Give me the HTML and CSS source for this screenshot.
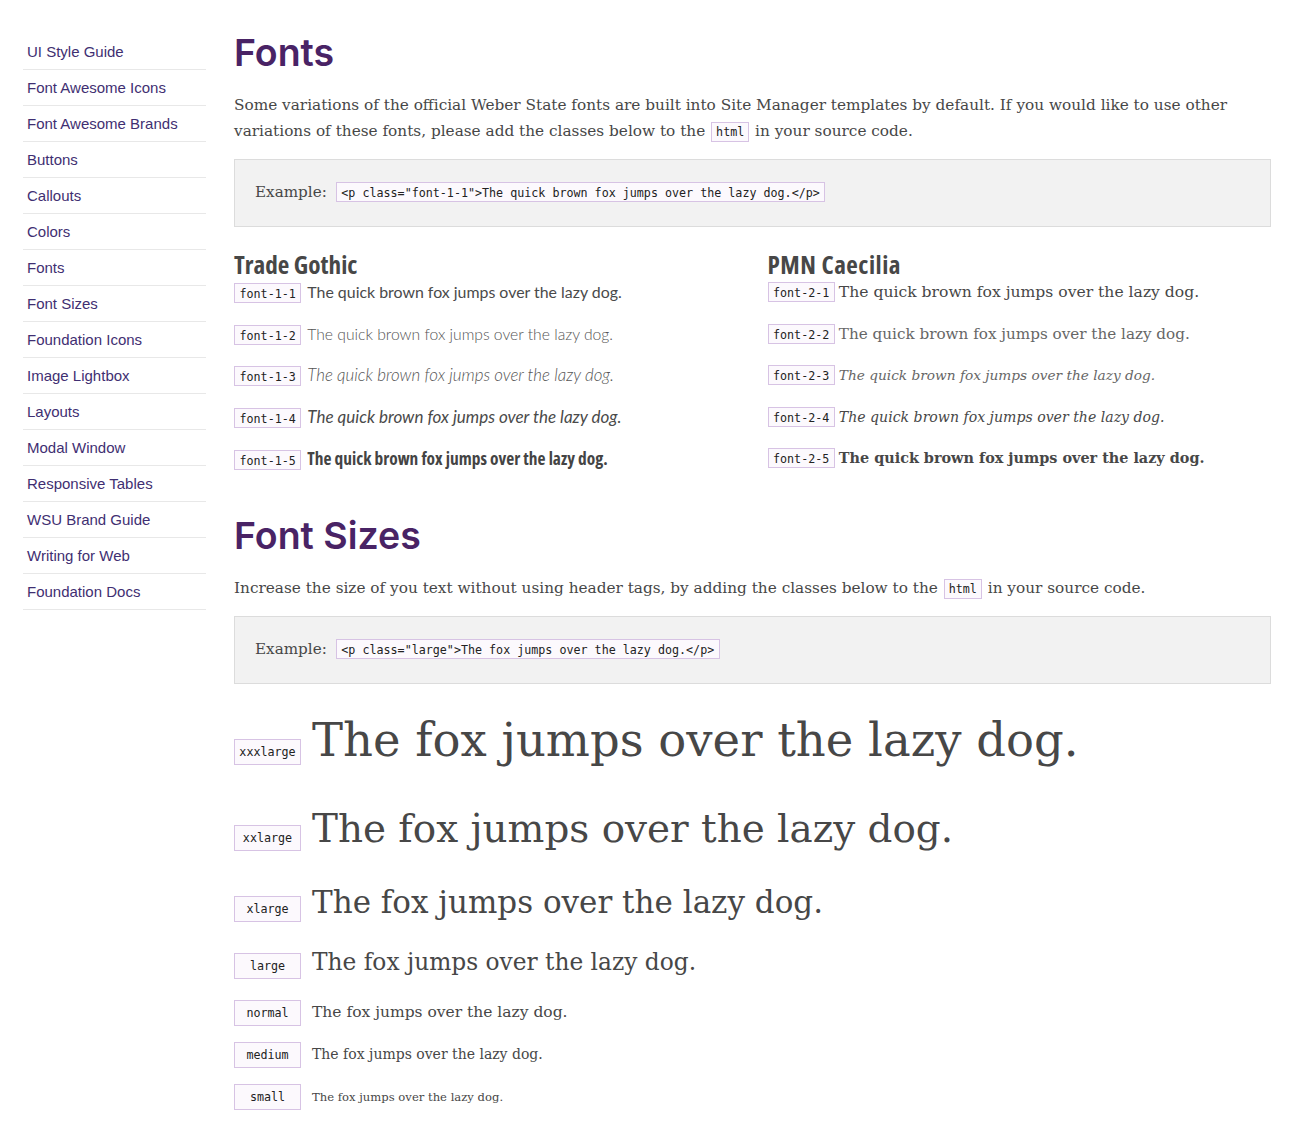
FILE: index.html
```html
<!DOCTYPE html>
<html lang="en">
<head>
<meta charset="utf-8">
<title>Fonts - UI Style Guide</title>
<link rel="stylesheet" href="styles.css">
</head>
<body>
<div class="page">
  <nav class="sidebar">
    <ul class="nav-list">
      <li class="nav-item"><a class="nav-link" href="#">UI Style Guide</a></li>
      <li class="nav-item"><a class="nav-link" href="#">Font Awesome Icons</a></li>
      <li class="nav-item"><a class="nav-link" href="#">Font Awesome Brands</a></li>
      <li class="nav-item"><a class="nav-link" href="#">Buttons</a></li>
      <li class="nav-item"><a class="nav-link" href="#">Callouts</a></li>
      <li class="nav-item"><a class="nav-link" href="#">Colors</a></li>
      <li class="nav-item"><a class="nav-link" href="#">Fonts</a></li>
      <li class="nav-item"><a class="nav-link" href="#">Font Sizes</a></li>
      <li class="nav-item"><a class="nav-link" href="#">Foundation Icons</a></li>
      <li class="nav-item"><a class="nav-link" href="#">Image Lightbox</a></li>
      <li class="nav-item"><a class="nav-link" href="#">Layouts</a></li>
      <li class="nav-item"><a class="nav-link" href="#">Modal Window</a></li>
      <li class="nav-item"><a class="nav-link" href="#">Responsive Tables</a></li>
      <li class="nav-item"><a class="nav-link" href="#">WSU Brand Guide</a></li>
      <li class="nav-item"><a class="nav-link" href="#">Writing for Web</a></li>
      <li class="nav-item"><a class="nav-link" href="#">Foundation Docs</a></li>
    </ul>
  </nav>

  <main class="content">
    <h1 class="section-title">Fonts</h1>
    <p class="lead">Some variations of the official Weber State fonts are built into Site Manager templates by default. If you would like to use other variations of these fonts, please add the classes below to the <code class="inline-code">html</code> in your source code.</p>
    <div class="example"><span class="example-label">Example:</span><code class="code">&lt;p class="font-1-1"&gt;The quick brown fox jumps over the lazy dog.&lt;/p&gt;</code></div>

    <div class="font-columns">
      <div class="font-col font-col--tg">
        <h3 class="family-title family-title--tg">Trade Gothic</h3>
        <p class="font-row"><code class="code row-label">font-1-1</code><span class="f11">The quick brown fox jumps over the lazy dog.</span></p>
        <p class="font-row"><code class="code row-label">font-1-2</code><span class="f12">The quick brown fox jumps over the lazy dog.</span></p>
        <p class="font-row"><code class="code row-label">font-1-3</code><span class="f13">The quick brown fox jumps over the lazy dog.</span></p>
        <p class="font-row"><code class="code row-label">font-1-4</code><span class="f14">The quick brown fox jumps over the lazy dog.</span></p>
        <p class="font-row"><code class="code row-label">font-1-5</code><span class="f15">The quick brown fox jumps over the lazy dog.</span></p>
      </div>
      <div class="font-col font-col--pc">
        <h3 class="family-title family-title--pc">PMN Caecilia</h3>
        <p class="font-row"><code class="code row-label">font-2-1</code><span class="f21">The quick brown fox jumps over the lazy dog.</span></p>
        <p class="font-row"><code class="code row-label">font-2-2</code><span class="f22">The quick brown fox jumps over the lazy dog.</span></p>
        <p class="font-row"><code class="code row-label">font-2-3</code><span class="f23">The quick brown fox jumps over the lazy dog.</span></p>
        <p class="font-row"><code class="code row-label">font-2-4</code><span class="f24">The quick brown fox jumps over the lazy dog.</span></p>
        <p class="font-row"><code class="code row-label">font-2-5</code><span class="f25">The quick brown fox jumps over the lazy dog.</span></p>
      </div>
    </div>

    <h2 class="section-title section-title--next">Font Sizes</h2>
    <p class="lead">Increase the size of you text without using header tags, by adding the classes below to the <code class="inline-code">html</code> in your source code.</p>
    <div class="example"><span class="example-label">Example:</span><code class="code">&lt;p class="large"&gt;The fox jumps over the lazy dog.&lt;/p&gt;</code></div>

    <div class="size-list">
      <p class="size-row size-xxxlarge"><code class="size-label">xxxlarge</code>The fox jumps over the lazy dog.</p>
      <p class="size-row size-xxlarge"><code class="size-label">xxlarge</code>The fox jumps over the lazy dog.</p>
      <p class="size-row size-xlarge"><code class="size-label">xlarge</code>The fox jumps over the lazy dog.</p>
      <p class="size-row size-large"><code class="size-label">large</code>The fox jumps over the lazy dog.</p>
      <p class="size-row size-normal"><code class="size-label">normal</code>The fox jumps over the lazy dog.</p>
      <p class="size-row size-medium"><code class="size-label">medium</code>The fox jumps over the lazy dog.</p>
      <p class="size-row size-small"><code class="size-label">small</code>The fox jumps over the lazy dog.</p>
    </div>
  </main>
</div>
</body>
</html>
```
FILE: styles.css
```css
html, body {
  margin: 0;
  padding: 0;
  background: #ffffff;
}

body {
  font-family: "DejaVu Serif", "Liberation Serif", serif;
  color: #474747;
}

.page {
  display: flex;
  align-items: flex-start;
}

/* Sidebar */
.sidebar {
  flex: 0 0 183px;
  width: 183px;
  margin: 34px 0 0 23px;
}

.nav-list {
  list-style: none;
  margin: 0;
  padding: 0;
}

.nav-item {
  border-bottom: 1px solid #e8e8e8;
}

.nav-link {
  display: block;
  padding: 0 4px;
  line-height: 35px;
  font-family: "Liberation Sans", Arial, sans-serif;
  font-size: 15px;
  color: #3f2f72;
  text-decoration: none;
}

/* Main content */
.content {
  width: 1037px;
  margin-left: 28px;
  padding-top: 31px;
}

.section-title {
  margin: 0;
  font-family: Inter, "Liberation Sans", sans-serif;
  font-weight: 600;
  font-size: 37.5px;
  line-height: 43px;
  color: #492365;
}

.section-title--next {
  margin-top: 25px;
}

.lead {
  margin: 18px 0 14px;
  font-size: 15.3px;
  line-height: 26px;
}

.inline-code,
.code,
.size-label {
  font-family: "DejaVu Sans Mono", "Liberation Mono", monospace;
  font-size: 11.7px;
  color: #222222;
  background: #fcf9fd;
  border: 1px solid #d7c3e4;
}

.inline-code {
  padding: 2px 4px;
  margin: 0 1px;
}

.code {
  padding: 3px 4.5px 1px;
  line-height: 1;
}

.example {
  background: #f2f2f2;
  border: 1px solid #dcdcdc;
  padding: 19px 20px 21px;
  line-height: 26px;
}

.example-label {
  font-size: 15.2px;
  margin-right: 9px;
}

/* Font families */
.font-columns {
  display: grid;
  grid-template-columns: 1fr 1fr;
  column-gap: 30px;
  margin-top: 23px;
}

.family-title {
  margin: 0 0 2px;
  font-family: "Open Sans", "DejaVu Sans Condensed", sans-serif;
  font-stretch: 75%;
  font-weight: 700;
  font-size: 25.2px;
  line-height: 28px;
  color: #474747;
}

.family-title--pc {
  letter-spacing: 0.5px;
}

.font-row {
  margin: 0 0 17.5px;
  font-family: Lato, "Liberation Sans", sans-serif;
  font-size: 16px;
  line-height: 24px;
  white-space: nowrap;
}

.font-col--pc .font-row {
  font-family: "DejaVu Serif", serif;
  font-size: 15.6px;
}

.font-col--tg .row-label {
  margin-right: 6px;
}

.font-col--pc .row-label {
  margin-right: 4px;
}

.f11 { font-family: Lato, sans-serif; font-weight: 400; font-size: 15.9px; color: #4a4a4a; }
.f12 { font-family: Lato, sans-serif; font-weight: 300; font-size: 15.7px; color: #555555; }
.f13 { font-family: Lato, sans-serif; font-weight: 300; font-style: italic; font-size: 16.9px; color: #555555; }
.f14 { font-family: Lato, sans-serif; font-weight: 400; font-style: italic; font-size: 17px; color: #4a4a4a; }
.f15 { font-family: "Open Sans", "DejaVu Sans Condensed", sans-serif; font-stretch: 75%; font-weight: 700; font-size: 17.4px; color: #444444; }

.f21 { font-size: 15.6px; color: #474747; }
.f22 { font-size: 15.2px; color: #666666; }
.f23 { font-style: italic; font-size: 13.7px; color: #666666; }
.f24 { font-style: italic; font-size: 14.1px; color: #474747; }
.f25 { font-weight: 700; font-size: 14.4px; color: #474747; }

/* Font sizes */
.size-list {
  margin-top: 19px;
}

.size-row {
  margin: 0 0 16px;
  color: #474747;
  white-space: nowrap;
}

.size-label {
  display: inline-block;
  box-sizing: border-box;
  width: 67px;
  height: 26px;
  line-height: 24px;
  text-align: center;
  margin-right: 11px;
  vertical-align: baseline;
}

.size-xxxlarge { font-size: 46.5px; line-height: 75px; }
.size-xxlarge { font-size: 38.9px; line-height: 70px; }
.size-xlarge { font-size: 31px; line-height: 44px; }
.size-large { font-size: 23.3px; line-height: 44px; }
.size-normal { font-size: 15.5px; line-height: 23px; }
.size-medium { font-size: 14px; line-height: 23px; }
.size-small { font-size: 11.6px; line-height: 23px; }
```
